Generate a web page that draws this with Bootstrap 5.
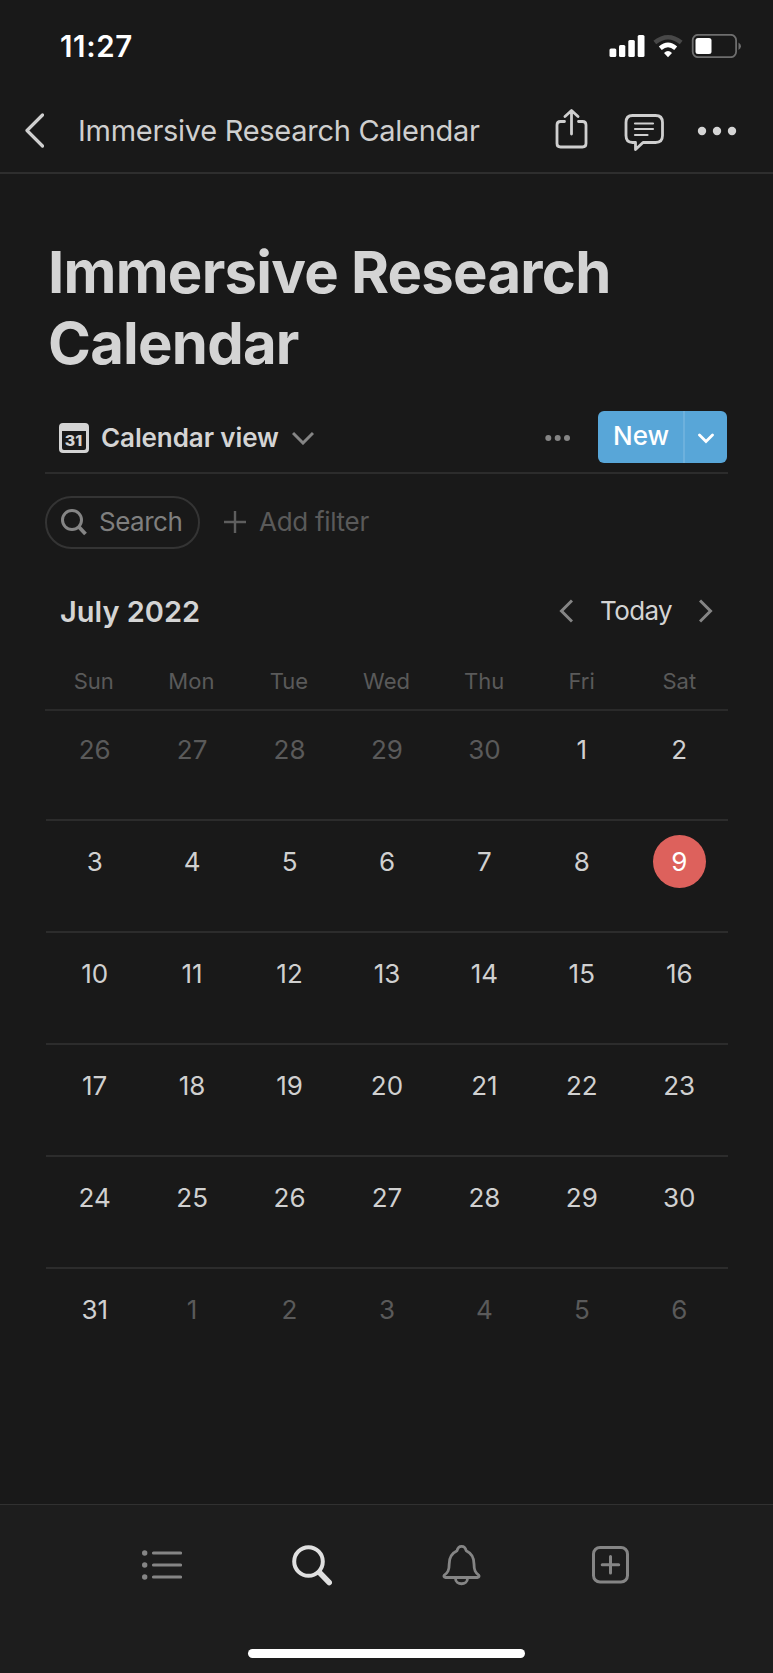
<!DOCTYPE html>
<html lang="en" data-bs-theme="dark">
<head>
<meta charset="utf-8">
<meta name="viewport" content="width=device-width, initial-scale=1">
<title>Immersive Research Calendar</title>
<link href="https://cdn.jsdelivr.net/npm/bootstrap@5.3.0/dist/css/bootstrap.min.css" rel="stylesheet">
<style>
body{background:#191919;color:#d4d4d4;font-family:Inter,"Liberation Sans",sans-serif;height:1673px;overflow:hidden}
svg{display:block;flex:none;fill:none}
.t{white-space:nowrap;line-height:1}
.status-row{height:92px;padding:0 32px 0 60px}
.clock{font-size:29.5px;font-weight:600;color:#fff;letter-spacing:.6px;padding-top:2px}
.topbar{height:82px;padding:0 36px 2px 24px;border-bottom:2px solid #2e2e2e}
.topbar-title{font-size:29px;margin-left:34px;padding-bottom:2px;color:#cfcfcf;letter-spacing:-.28px}
.main-area{padding:0 45px}
.page-title{color:#d4d4d4;font-size:58px;font-weight:700;line-height:71px;letter-spacing:-.76px;margin:63px 0 0 3px;white-space:nowrap}
.view-row{height:63px;margin-top:32px;border-bottom:2px solid #2c2c2c;padding-left:14px}
.view-tab{height:54px}
.view-name{font-size:26px;font-weight:600;margin-left:12px;letter-spacing:-.1px}
.view-caret{margin-left:13px}
.view-dots{margin-right:27px}
.new-group{height:52px;width:129px;margin-right:1px}
.new-group .btn{background:#58a6d8;border:0;color:#fff;font-size:26px;font-weight:500;line-height:1;padding:0 0 2px}
.new-group .btn:last-child{width:44px;flex:none;border-left:2px solid #6db1dd;padding:3px 1px 0 0}
.filter-row{height:52px;margin-top:22px}
.search-pill{width:155px;height:53px;border:2px solid #343434;padding-left:14px;color:#7f7f7f;font-size:26px}
.search-label{letter-spacing:-.5px}
.add-filter{font-size:26px;color:#5a5a5a;letter-spacing:-.3px;margin-left:13px}
.month-row{height:46px;margin-top:40px;padding:0 15px 0 15px}
.month{font-size:29px;font-weight:600}
.today-label{font-size:26px;width:70px;margin:0 29px 0 27px;letter-spacing:-.6px}
.weekdays{height:77px;padding-top:36px;border-bottom:2px solid #2a2a2a;font-size:22px;color:#5a5a5a}
.weeks{margin-left:1px}
.week{height:112px;border-bottom:2px solid #2c2c2c;padding-top:14px}
.week:first-child{height:110px;padding-top:12px}
.week:last-child{border:0}
.week>div,.weekdays>div{flex:1 1 0;min-width:0}
.day{width:53px;height:53px;font-size:26px;padding-bottom:1px;color:#d0d0d0}
.out .day{color:#5a5a5a}
.day.now{background:#dd615c;color:#fff}
.tabbar{height:169px;background:#1d1d1d;border-top:1px solid #313131}
.tab-icons{height:120px;padding:0 141px 0 142px}
.home-bar{width:277px;height:9px;background:#fff;margin-top:24px}
</style>
</head>
<body class="d-flex flex-column">
<header>
<div class="status-row d-flex align-items-center justify-content-between">
<span class="t clock">11:27</span>
<svg width="132" height="24" viewBox="609 34 132 24"><g fill="#fff"><rect x="609.5" y="48.5" width="6.8" height="8.5" rx="1.5"/><rect x="619" y="45" width="6.3" height="12" rx="1.5"/><rect x="628.3" y="40" width="6.5" height="17" rx="1.5"/><rect x="637.7" y="35" width="6.8" height="22" rx="1.5"/></g>
<path d="M654.8 42.5q13.200-10.500 26.400 0" stroke="#484848" stroke-width="4.500"/><path d="M660.300 48.200q7.700-6.500 15.400 0" stroke="#fff" stroke-width="4.500"/><path d="M664 53q4-3.800 8 0l-4 4.200z" fill="#fff"/>
<rect x="692.700" y="34.800" width="43.400" height="22.400" rx="5.500" stroke="#6e6e6e" stroke-width="1.800"/><rect x="695.500" y="38" width="16" height="16" rx="2.500" fill="#fff"/><path d="M738.500 42.500q5 3.500 0 7.500z" fill="#6e6e6e"/></svg>
</div>
<nav class="topbar d-flex align-items-center">
<svg width="20" height="36" viewBox="0 0 20 36"><path d="M18.500 2 3 17.500 18.500 33" stroke="#cfcfcf" stroke-width="3.200" stroke-linecap="round" stroke-linejoin="round"/></svg>
<span class="t topbar-title">Immersive Research Calendar</span>
<svg class="ms-auto" width="182" height="44" viewBox="555 109 182 44" stroke="#cfcfcf" stroke-width="2.800" stroke-linecap="round" stroke-linejoin="round"><path d="M564.500 121.500h-4q-3.500 0-3.500 3.500v18.500q0 3.500 3.500 3.500h22q3.500 0 3.500-3.500V125q0-3.500-3.500-3.500h-4M571.500 134v-23M565 116.500l6.500-6 6.500 6"/><path d="M632.500 115.500h23q7 0 7 7v13q0 7-7 7h-12.500l-7.500 7v-7h-3q-6.500 0-6.500-7v-13q0-7 6.500-7z"/><path stroke-width="2.200" d="M635 123.500h18M635 129h18M635 135h12.500"/><g fill="#d4d4d4" stroke="none"><circle cx="702" cy="131" r="4.200"/><circle cx="717" cy="131" r="4.200"/><circle cx="732" cy="131" r="4.200"/></g></svg>
</nav>
</header>
<main class="main-area flex-grow-1">
<h1 class="page-title">Immersive Research<br>Calendar</h1>
<div class="view-row d-flex">
<div class="view-tab d-flex align-items-center">
<svg width="30" height="30"><path fill-rule="evenodd" fill="#d4d4d4" d="M4 0h22q4 0 4 4v22q0 4-4 4H4q-4 0-4-4V4q0-4 4-4zM3 8v17q0 2 2 2h20q2 0 2-2V8z"/><text x="14.500" y="22.500" text-anchor="middle" textLength="17.500" lengthAdjust="spacingAndGlyphs" font-family="Inter" font-weight="800" font-size="14.500" fill="#d4d4d4">31</text></svg>
<span class="t view-name">Calendar view</span>
<svg class="view-caret" width="22" height="14"><path d="m1 2 10 10L21 2" stroke="#858585" stroke-width="3"/></svg>
</div>
<div class="d-flex ms-auto">
<svg class="view-dots" width="26" height="54"><g fill="#858585"><circle cx="3.300" cy="27" r="3"/><circle cx="12.700" cy="27" r="3"/><circle cx="22" cy="27" r="3"/></g></svg>
<div class="btn-group new-group"><button class="btn">New</button><button class="btn d-flex align-items-center justify-content-center" aria-label="More templates"><svg width="16" height="11"><path d="m1.500 2 6.500 6.500L14.500 2" stroke="#fff" stroke-width="2.800" stroke-linecap="round"/></svg></button></div>
</div>
</div>
<div class="filter-row d-flex align-items-center">
<div class="search-pill rounded-pill d-flex align-items-center"><svg width="26" height="27"><circle cx="11" cy="11" r="9.500" stroke="#858585" stroke-width="3"/><path d="m17.500 17.500 7 7.500" stroke="#858585" stroke-width="3.800"/></svg><span class="t search-label ms-2 ps-1">Search</span></div>
<svg class="ms-4" width="22" height="22"><path d="M11 0v22M0 11h22" stroke="#5e5e5e" stroke-width="2.400"/></svg>
<span class="t add-filter">Add filter</span>
</div>
<div class="month-row d-flex align-items-center">
<span class="t month">July 2022</span>
<svg class="ms-auto" width="14" height="24"><path d="M13 1.500 2.500 12 13 22.500" stroke="#858585" stroke-width="3"/></svg>
<span class="t today-label">Today</span>
<svg width="14" height="24"><path d="M1 1.500 11.500 12 1 22.500" stroke="#858585" stroke-width="3"/></svg>
</div>
<div class="weekdays d-flex text-center t" id="weekdays"></div>
<div class="weeks" id="weeks"></div>
</main>
<footer class="tabbar d-flex flex-column align-items-center">
<div class="tab-icons d-flex align-items-center justify-content-between w-100">
<svg width="40" height="30"><g fill="#858585"><circle cx="2.700" cy="3" r="2.700"/><circle cx="2.700" cy="15" r="2.700"/><circle cx="2.700" cy="27" r="2.700"/></g><path d="M11.500 3h27M11.500 15h27M11.500 27h27" stroke="#858585" stroke-width="3.200" stroke-linecap="round"/></svg>
<svg width="40" height="42"><circle cx="16.500" cy="17.500" r="14.300" stroke="#e0e0e0" stroke-width="4"/><path d="m27.500 28.500 9.700 10" stroke="#e0e0e0" stroke-width="5.500" stroke-linecap="round"/></svg>
<svg width="40" height="42" stroke="#858585" stroke-width="2.800" stroke-linejoin="round"><path d="M15 6.800c1.200-6 8-6 9.200 0 5.500 2.600 7.800 7.500 7.800 13.200 0 6.500 1.500 8.500 4.500 11 1 1.200.8 2.500-1 2.500H3.500c-1.800 0-2-1.300-1-2.500C5.700 28.500 7.200 26.500 7.200 20c0-5.700 2.300-10.600 7.800-13.200zM13.500 34.500c0 7 12 7 12 0"/></svg>
<svg width="40" height="38" stroke="#858585" stroke-linecap="round"><rect x="1.500" y="1.500" width="34" height="34.500" rx="6.500" stroke-width="3"/><path d="M18.500 10.500v16.500M10.200 18.700h16.500" stroke-width="3"/></svg>
</div>
<div class="home-bar rounded-pill"></div>
</footer>
<script>
document.getElementById('weekdays').innerHTML=['Sun','Mon','Tue','Wed','Thu','Fri','Sat'].map(d=>`<div>${d}</div>`).join('');
let html='';
for(let w=0;w<6;w++){html+='<div class="week d-flex">';
for(let i=0;i<7;i++){const n=w*7+i-4,out=n<1||n>31,v=n<1?n+30:n>31?n-31:n;
html+=`<div class="d-flex justify-content-center${out?' out':''}"><span class="day rounded-circle d-flex align-items-center justify-content-center${n===9?' now':''}">${v}</span></div>`}
html+='</div>'}
document.getElementById('weeks').innerHTML=html;
</script>
<script src="https://cdn.jsdelivr.net/npm/bootstrap@5.3.0/dist/js/bootstrap.bundle.min.js"></script>
</body>
</html>
